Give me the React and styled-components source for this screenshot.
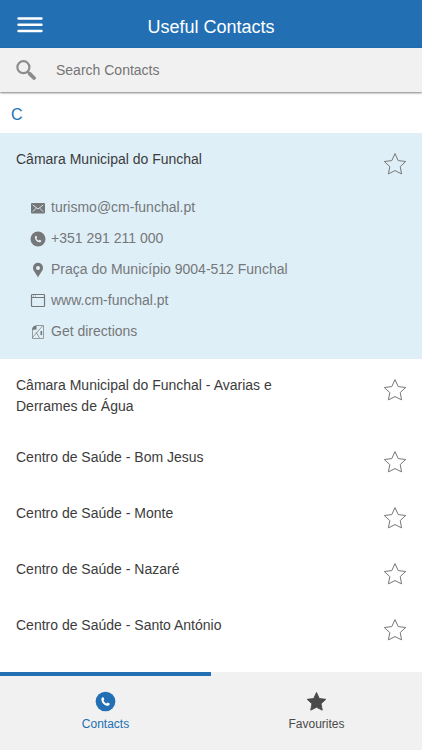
import React, { useState } from "react";
import styled, { createGlobalStyle, ThemeProvider } from "styled-components";

const theme = {
  colors: {
    primary: "#2270b3",
    bar: "#f1f1f1",
    selected: "#dfeff8",
    text: "#3c3c3c",
    muted: "#757779",
  },
};

const GlobalStyle = createGlobalStyle`
  * {
    box-sizing: border-box;
  }

  body {
    margin: 0;
    background-color: white;
    color: ${(props) => props.theme.colors.text};
    font-family: "Liberation Sans", Arial, sans-serif;
    font-size: 14px;
  }

  button, input {
    font-family: inherit;
  }
`;

const Page = styled.div`
  display: flex;
  flex-direction: column;
  min-height: 100vh;
`;

const Header = styled.header`
  display: grid;
  grid-template-columns: 60px 1fr 60px;
  align-items: center;
  background-color: ${(props) => props.theme.colors.primary};
`;

const Title = styled.h1`
  margin: 0;
  padding: 15px 0 9px;
  color: white;
  font-size: 18px;
  font-weight: 400;
  line-height: 24px;
  text-align: center;
`;

const IconButton = styled.button`
  display: flex;
  justify-content: center;
  padding: 0;
  border: 0;
  background: none;
  color: inherit;
  cursor: pointer;
`;

const MenuButton = styled(IconButton)`
  padding-top: 2px;
  color: white;
`;

const SearchBar = styled.label`
  display: flex;
  align-items: center;
  gap: 20px;
  padding: 0 16px;
  background-color: ${(props) => props.theme.colors.bar};
  box-shadow: 0 1px 2px rgba(0, 0, 0, 0.5);
  color: #8c8c8c;
`;

const SearchInput = styled.input`
  flex: 1;
  min-width: 0;
  height: 44px;
  padding: 0;
  border: 0;
  outline: none;
  background: none;
  color: ${(props) => props.theme.colors.text};
  font-size: 14px;

  &::placeholder {
    color: #757575;
    opacity: 1;
  }
`;

const Content = styled.main`
  flex: 1;
`;

const Letter = styled.h2`
  margin: 0;
  padding: 13px 11px 8px;
  color: ${(props) => props.theme.colors.primary};
  font-size: 16px;
  font-weight: 400;
  line-height: 20px;
`;

const ContactList = styled.ul`
  margin: 0;
  padding: 0;
  list-style: none;
`;

const ContactItem = styled.li`
  background-color: ${(props) =>
    props.$open ? props.theme.colors.selected : "white"};
`;

const ContactRow = styled.div`
  display: flex;
  align-items: flex-start;
  justify-content: space-between;
`;

const ContactName = styled.button`
  flex: 1;
  padding: 16px 48px 14px 16px;
  border: 0;
  background: none;
  color: inherit;
  font-size: 14px;
  line-height: 21px;
  text-align: left;
  cursor: pointer;
`;

const StarButton = styled(IconButton)`
  padding: 19px 15px 13px;
  color: #777;
`;

const Details = styled.div`
  display: flex;
  flex-direction: column;
  align-items: flex-start;
  padding: 3px 30px 12px;
`;

const DetailLink = styled.a`
  display: flex;
  align-items: center;
  gap: 5px;
  color: ${(props) => props.theme.colors.muted};
  line-height: 31px;
  text-decoration: none;
`;

const TabBar = styled.nav`
  position: sticky;
  bottom: 0;
  display: grid;
  grid-template-columns: 1fr 1fr;
  background-color: ${(props) => props.theme.colors.bar};
`;

const Tab = styled.button`
  display: flex;
  flex-direction: column;
  align-items: center;
  gap: 4px;
  padding: 15px 0 18px;
  border: 0;
  border-top: 4px solid
    ${(props) => (props.$active ? props.theme.colors.primary : "transparent")};
  background: none;
  color: ${(props) => (props.$active ? props.theme.colors.primary : "#4a4a4a")};
  font-size: 12px;
  line-height: 16px;
  cursor: pointer;
`;

const MenuIcon = () => (
  <svg width="26" height="18" viewBox="0 0 26 18" aria-hidden="true">
    <path
      d="M1.6 2.5h22.8M1.6 8.8h22.8M1.6 15h22.8"
      stroke="currentColor"
      strokeWidth="2.6"
      strokeLinecap="round"
    />
  </svg>
);

const SearchIcon = () => (
  <svg width="20" height="20" viewBox="0 0 20 20" fill="none" aria-hidden="true">
    <circle cx="7.4" cy="7.2" r="6" stroke="currentColor" strokeWidth="2.2" />
    <path d="m11.6 11.6 2.4 2.4" stroke="currentColor" strokeWidth="2.4" />
    <path
      d="m13.8 13.8 4.2 4.2"
      stroke="currentColor"
      strokeWidth="3.8"
      strokeLinecap="round"
    />
  </svg>
);

const StarIcon = ({ size, filled }) => (
  <svg width={size} height={size} viewBox="0 0 24 24" aria-hidden="true">
    <path
      d="M12 1.6 15.2 8.6 22.7 9.5 17.2 14.6 18.6 21.9 12 18.6 5.4 21.9 6.8 14.6 1.3 9.5 8.8 8.6Z"
      fill={filled ? "currentColor" : "none"}
      stroke="currentColor"
      strokeLinejoin="round"
    />
  </svg>
);

const MailIcon = () => (
  <svg width="16" height="16" viewBox="0 0 16 16" fill="none" aria-hidden="true">
    <rect x="1" y="3" width="14" height="10.4" rx="1" fill="currentColor" />
    <path
      d="m2.8 5 5.2 4 5.2-4M2.8 11.6l3.4-3.4M13.2 11.6 9.8 8.2"
      stroke="#dfeff8"
      strokeWidth="0.9"
    />
  </svg>
);

const PhoneIcon = ({ size, cutout }) => (
  <svg width={size} height={size} viewBox="0 0 16 16" aria-hidden="true">
    <circle cx="8" cy="8" r="7.5" fill="currentColor" />
    <path
      d="M5.4 5 6.5 4.8 7.1 6.5 6.5 7.2C6.9 8.3 7.7 9.1 8.8 9.5L9.5 8.8 11.2 9.5 11 10.7C10.6 11.2 9.8 11.4 9 11.2 6.9 10.7 5.3 9.1 4.9 7 4.8 6.2 4.9 5.5 5.4 5Z"
      fill={cutout}
    />
  </svg>
);

const PinIcon = () => (
  <svg width="16" height="16" viewBox="0 0 16 16" aria-hidden="true">
    <path
      fillRule="evenodd"
      fill="currentColor"
      d="M8 .8a5 5 0 0 0-5 5C3 9 5.8 11 8 15.4 10.2 11 13 9 13 5.8a5 5 0 0 0-5-5Zm0 3.1a2 2 0 1 1 0 4 2 2 0 0 1 0-4Z"
    />
  </svg>
);

const BrowserIcon = () => (
  <svg width="16" height="16" viewBox="0 0 16 16" fill="none" aria-hidden="true">
    <rect
      x="1.5"
      y="1.5"
      width="13"
      height="12"
      rx="0.8"
      stroke="currentColor"
      strokeWidth="1.2"
    />
    <path d="M1.5 4.5h13" stroke="currentColor" />
    <path d="M3 3h1M5 3h1" stroke="currentColor" strokeWidth="0.8" />
  </svg>
);

const MapIcon = () => (
  <svg width="16" height="16" viewBox="0 0 16 16" fill="none" aria-hidden="true">
    <path
      d="M2.5 6v8.5h11v-13H6M2.5 13.5 12.5 2M6 8l3.5 6"
      stroke="currentColor"
      strokeWidth="0.7"
    />
    <path d="M2 6C2 3 3.5 1.5 6.5 1.5V5.500Z" fill="currentColor" />
    <path d="M10.5 7h1.6v3.500l-.8 1-.8-1Z" fill="currentColor" />
  </svg>
);

const contacts = [
  {
    id: 1,
    name: "Câmara Municipal do Funchal",
    details: [
      {
        icon: <MailIcon />,
        text: "turismo@cm-funchal.pt",
        href: "mailto:turismo@cm-funchal.pt",
      },
      {
        icon: <PhoneIcon size={16} cutout={theme.colors.selected} />,
        text: "+351 291 211 000",
        href: "tel:+351291211000",
      },
      {
        icon: <PinIcon />,
        text: "Praça do Município 9004-512 Funchal",
        href: "#address",
      },
      {
        icon: <BrowserIcon />,
        text: "www.cm-funchal.pt",
        href: "http://www.cm-funchal.pt",
      },
      { icon: <MapIcon />, text: "Get directions", href: "#directions" },
    ],
  },
  { id: 2, name: "Câmara Municipal do Funchal - Avarias e Derrames de Água" },
  { id: 3, name: "Centro de Saúde - Bom Jesus" },
  { id: 4, name: "Centro de Saúde - Monte" },
  { id: 5, name: "Centro de Saúde - Nazaré" },
  { id: 6, name: "Centro de Saúde - Santo António" },
];

const Contact = ({ contact, open, onToggle }) => {
  const [favourite, setFavourite] = useState(false);
  return (
    <ContactItem $open={open}>
      <ContactRow>
        <ContactName aria-expanded={open} onClick={onToggle}>
          {contact.name}
        </ContactName>
        <StarButton
          aria-label="Favourite"
          aria-pressed={favourite}
          onClick={() => setFavourite(!favourite)}
        >
          <StarIcon size={24} filled={favourite} />
        </StarButton>
      </ContactRow>
      {open && contact.details && (
        <Details>
          {contact.details.map((detail) => (
            <DetailLink key={detail.text} href={detail.href}>
              {detail.icon}
              {detail.text}
            </DetailLink>
          ))}
        </Details>
      )}
    </ContactItem>
  );
};

const App = () => {
  const [openId, setOpenId] = useState(1);
  const [tab, setTab] = useState("contacts");
  return (
    <ThemeProvider theme={theme}>
      <GlobalStyle />
      <Page>
        <Header>
          <MenuButton aria-label="Menu">
            <MenuIcon />
          </MenuButton>
          <Title>Useful Contacts</Title>
        </Header>
        <SearchBar>
          <SearchIcon />
          <SearchInput
            type="text"
            aria-label="Search Contacts"
            placeholder="Search Contacts"
          />
        </SearchBar>
        <Content>
          <Letter>C</Letter>
          <ContactList>
            {contacts.map((contact) => (
              <Contact
                key={contact.id}
                contact={contact}
                open={contact.id === openId}
                onToggle={() =>
                  setOpenId(contact.id === openId ? null : contact.id)
                }
              />
            ))}
          </ContactList>
        </Content>
        <TabBar>
          <Tab $active={tab === "contacts"} onClick={() => setTab("contacts")}>
            <PhoneIcon size={21} cutout="white" />
            Contacts
          </Tab>
          <Tab
            $active={tab === "favourites"}
            onClick={() => setTab("favourites")}
          >
            <StarIcon size={21} filled />
            Favourites
          </Tab>
        </TabBar>
      </Page>
    </ThemeProvider>
  );
};

export default App;
